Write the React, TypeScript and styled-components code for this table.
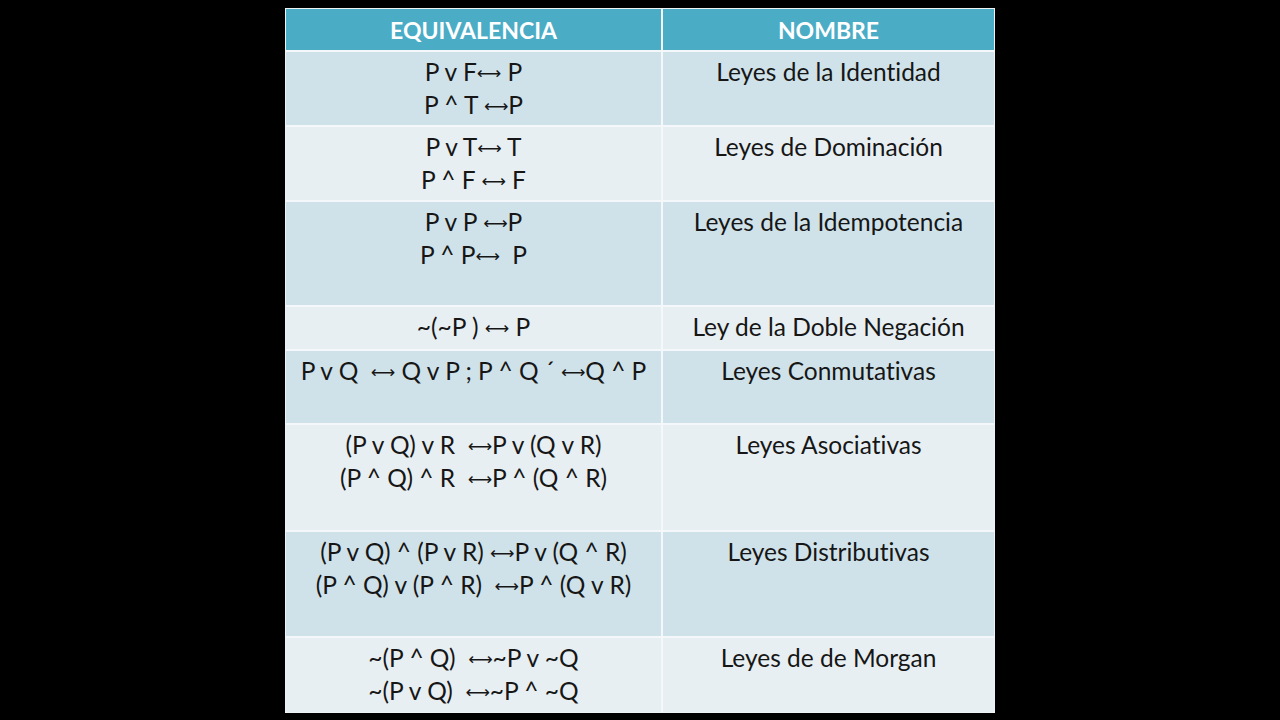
import styled, { createGlobalStyle } from "styled-components";

const GlobalStyle = createGlobalStyle`
    html, body {
        margin: 0;
        padding: 0;
        background: #000;
    }
    body {
        font-family: Lato, "Liberation Sans", "DejaVu Sans", sans-serif;
        font-variant-ligatures: none;
    }
`;

const Page = styled.div`
    width: 1280px;
    height: 720px;
    background: #000;
    display: flex;
    justify-content: flex-start;
    align-items: flex-start;
    padding: 8px 0 0 285px;
    box-sizing: border-box;
`;

const Table = styled.div`
    width: 710px;
    display: grid;
    gap: 2px;
    background: #f4f8fa;
    border: 1px solid #eef4f6;
    box-sizing: border-box;
`;

const Row = styled.div<{ $h: number }>`
    display: grid;
    grid-template-columns: 375px 1fr;
    gap: 2px;
    height: ${p => p.$h}px;
`;

const HeadCell = styled.div`
    background: #4bacc6;
    color: #fff;
    font-weight: 700;
    font-size: 23px;
    display: flex;
    align-items: center;
    justify-content: center;
    padding-top: 1px;
`;

const Cell = styled.div<{ $band: boolean }>`
    background: ${p => p.$band ? "#d0e2e9" : "#e8eff2"};
    color: #161616;
    font-size: 24.5px;
    line-height: 32px;
    text-align: center;
    padding-top: 4px;
    white-space: pre;
    box-sizing: border-box;
`;

const Arrow = styled.span`
    font-family: "DejaVu Sans", sans-serif;
    font-size: 17px;
    font-weight: 400;
    vertical-align: 2px;
`;

const rows: { h: number; eq: string[]; name: string }[] = [
    { h: 73, eq: ["P v F↔ P", "P ^ T ↔P"], name: "Leyes de la Identidad" },
    { h: 73, eq: ["P v T↔ T", "P ^ F ↔ F"], name: "Leyes de Dominación" },
    { h: 103, eq: ["P v P ↔P", "P ^ P↔  P"], name: "Leyes de la Idempotencia" },
    { h: 42, eq: ["~(~P ) ↔ P"], name: "Ley de la Doble Negación" },
    { h: 72, eq: ["P v Q  ↔ Q v P ; P ^ Q ´ ↔Q ^ P"], name: "Leyes Conmutativas" },
    { h: 105, eq: ["(P v Q) v R  ↔P v (Q v R)", "(P ^ Q) ^ R  ↔P ^ (Q ^ R)"], name: "Leyes Asociativas" },
    { h: 104, eq: ["(P v Q) ^ (P v R) ↔P v (Q ^ R)", "(P ^ Q) v (P ^ R)  ↔P ^ (Q v R)"], name: "Leyes Distributivas" },
    { h: 74, eq: ["~(P ^ Q)  ↔~P v ~Q", "~(P v Q)  ↔~P ^ ~Q"], name: "Leyes de de Morgan" },
];

// the slide's arrow is a long thin double arrow, so swap in U+27F7
function Line({ text }: { text: string }) {
    const parts = text.split("↔");
    return (
        <div>
            {parts.map((part, i) => (
                <span key={i}>
                    {i > 0 && <Arrow>⟷</Arrow>}
                    {part}
                </span>
            ))}
        </div>
    );
}

export default function App() {
    return (
        <>
            <GlobalStyle />
            <Page>
                <Table>
                    <Row $h={41}>
                        <HeadCell>EQUIVALENCIA</HeadCell>
                        <HeadCell>NOMBRE</HeadCell>
                    </Row>
                    {rows.map((row, i) => (
                        <Row key={i} $h={row.h}>
                            <Cell $band={i % 2 === 0}>
                                {row.eq.map((l, j) => <Line key={j} text={l} />)}
                            </Cell>
                            <Cell $band={i % 2 === 0}>{row.name}</Cell>
                        </Row>
                    ))}
                </Table>
            </Page>
        </>
    );
}
